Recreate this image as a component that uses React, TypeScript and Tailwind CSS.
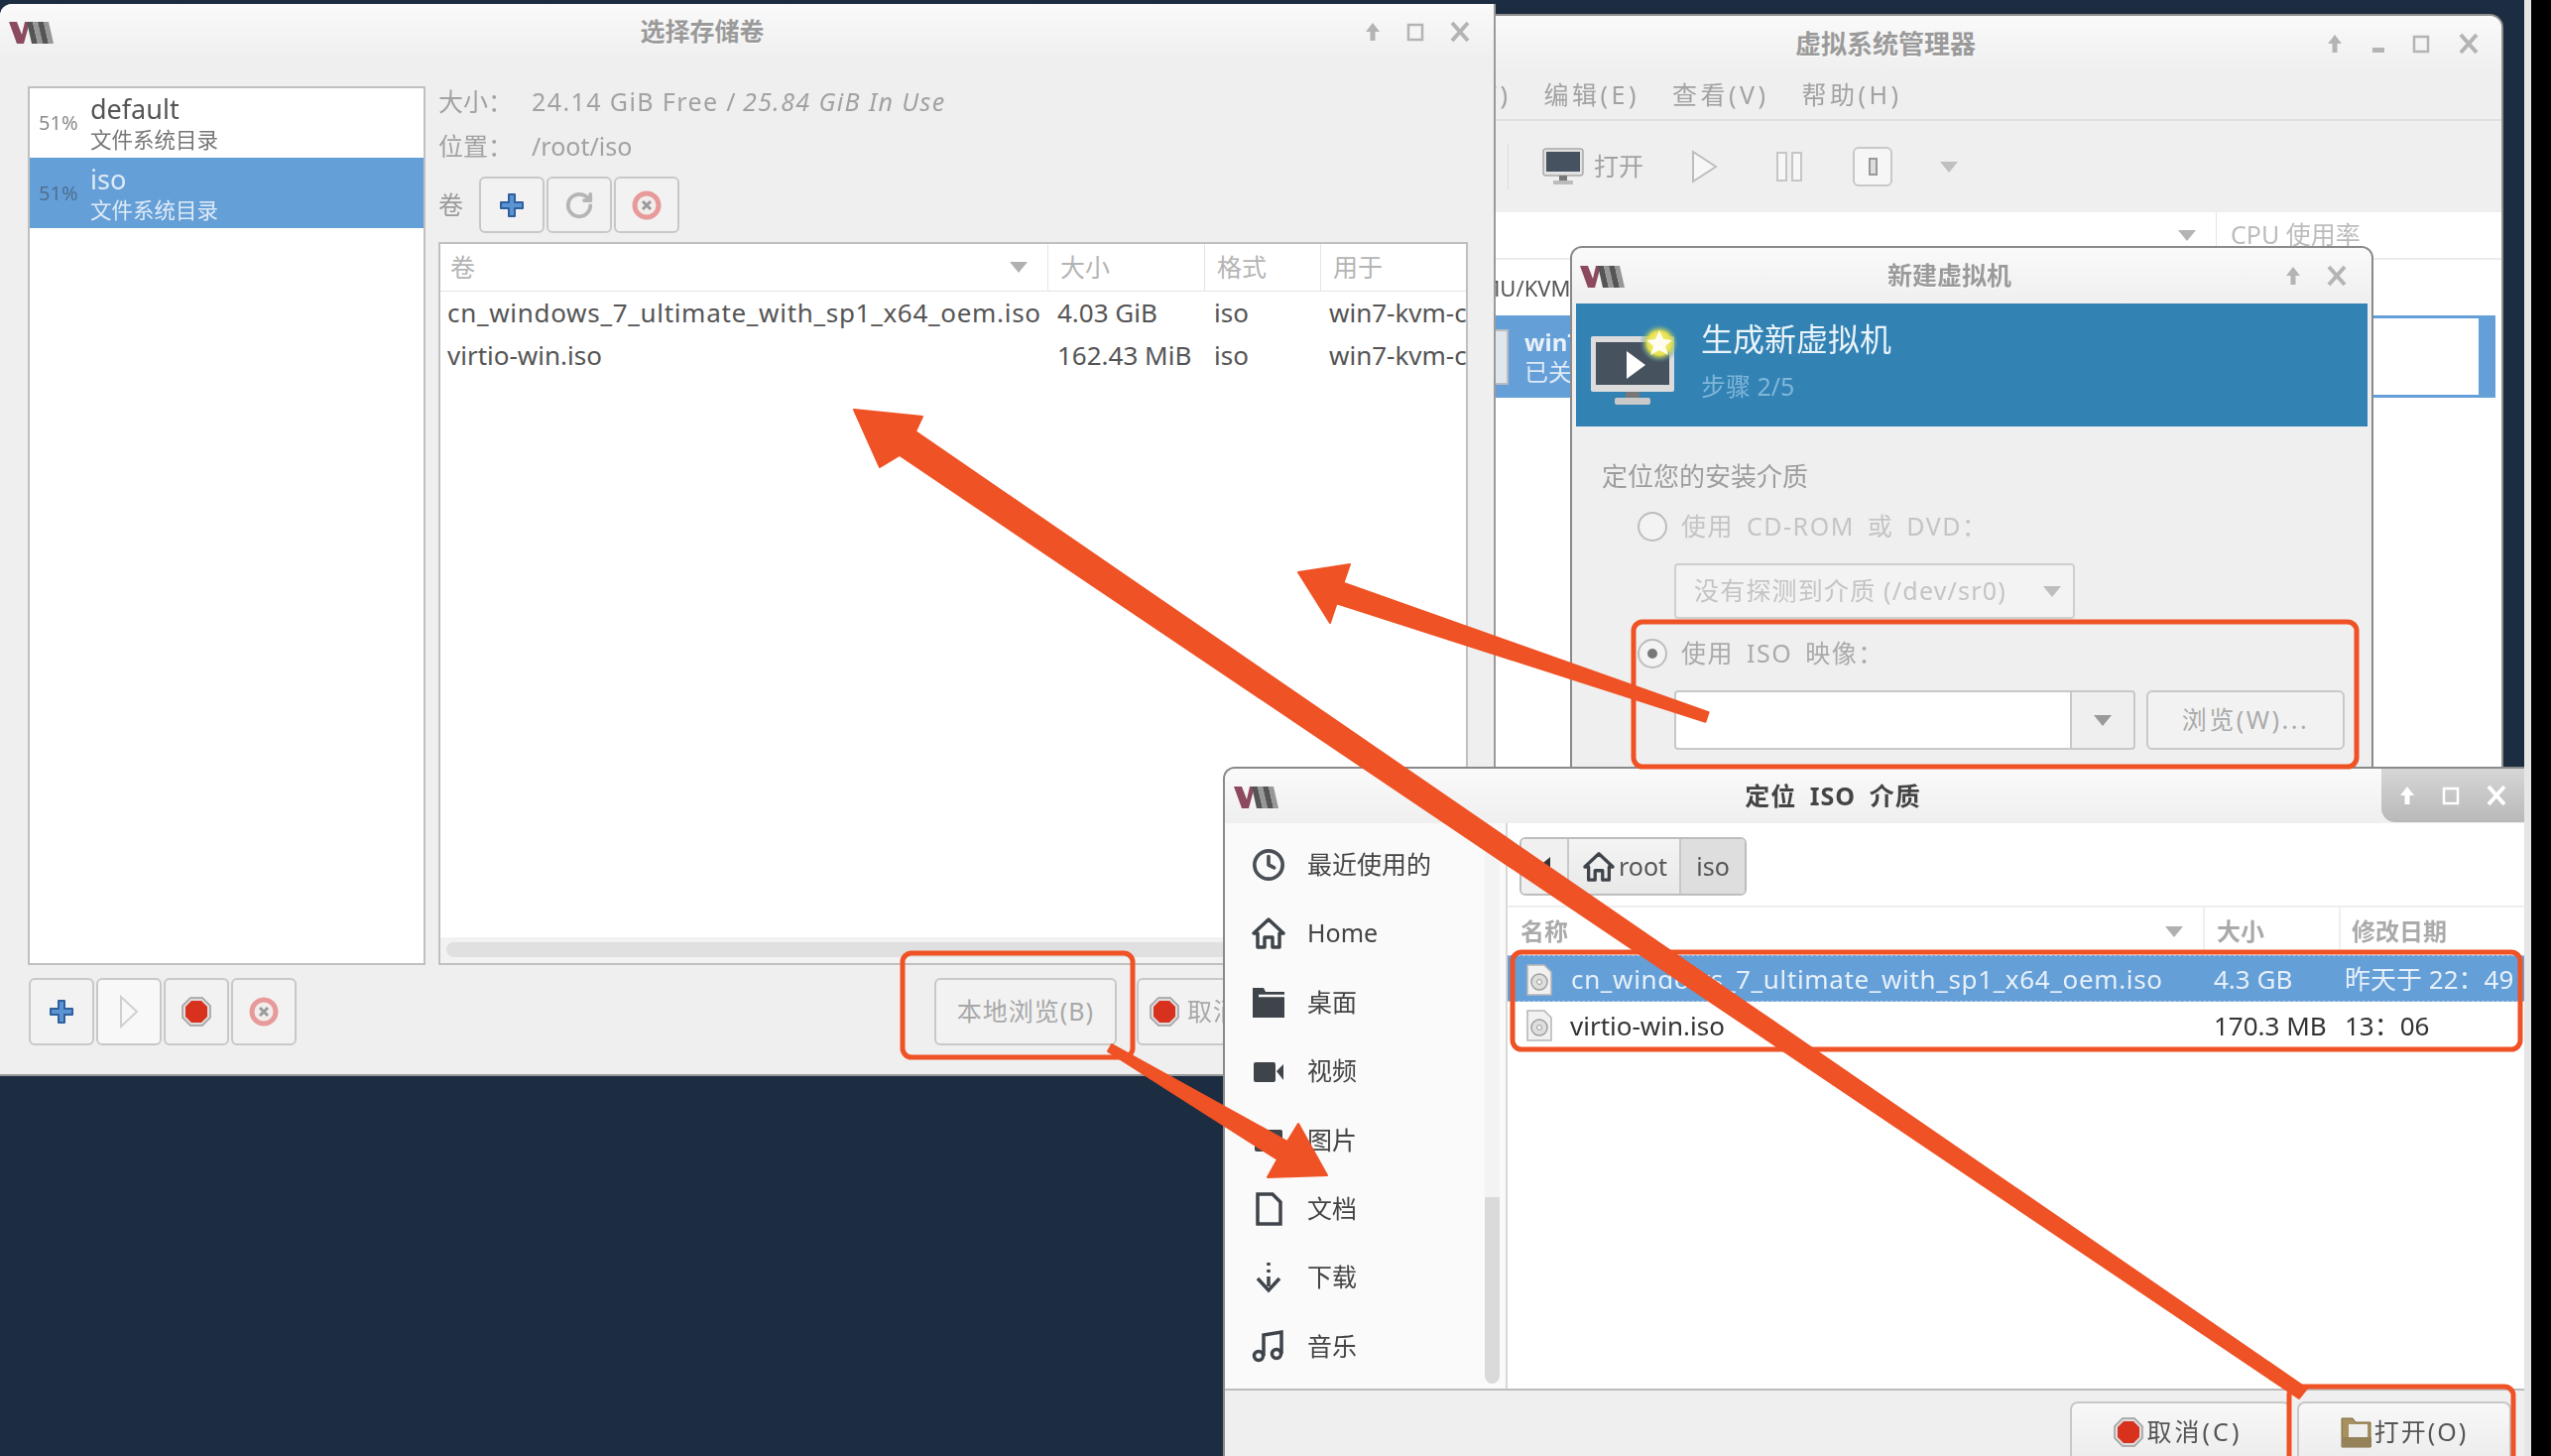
import React from "react";
import { Clock, RotateCw } from "lucide-react";

const Logo = () => (
  <svg width="46" height="26" viewBox="0 0 46 26" className="shrink-0">
    <polygon points="1,3 9,3 14,16 17,3 22,3 16,25 9,25" fill="#8d4a5e" />
    <polygon points="19,3 25,3 30,25 24,25" fill="#555" />
    <polygon points="25,3 30,3 35,25 30,25" fill="#979797" />
    <polygon points="30,3 36,3 41,25 35,25" fill="#555" />
    <polygon points="36,3 41,3 46,25 41,25" fill="#979797" />
  </svg>
);

const Up = ({ c = "#b4b4b4" }: { c?: string }) => (
  <svg width="20" height="24" viewBox="0 0 20 24" className="shrink-0">
    <path d="M10 3 L17 12 H12.5 V21 H7.5 V12 H3 Z" fill={c} />
  </svg>
);
const Max = ({ c = "#b4b4b4" }: { c?: string }) => (
  <svg width="18" height="20" viewBox="0 0 18 20" className="shrink-0">
    <rect x="2" y="3" width="14" height="15" fill="none" stroke={c} strokeWidth="2.5" />
  </svg>
);
const Min = ({ c = "#b4b4b4" }: { c?: string }) => (
  <svg width="14" height="20" viewBox="0 0 14 20" className="shrink-0">
    <rect x="1" y="14" width="12" height="5" fill={c} />
  </svg>
);
const Cross = ({ c = "#b4b4b4" }: { c?: string }) => (
  <svg width="24" height="24" viewBox="0 0 24 24" className="shrink-0">
    <path d="M4 3 L20 21 M20 3 L4 21" stroke={c} strokeWidth="4" fill="none" />
  </svg>
);

const Tri = ({ c = "#b0b0b0", w = 18, h = 11 }: { c?: string; w?: number; h?: number }) => (
  <svg width={w} height={h} viewBox="0 0 18 11" className="shrink-0">
    <path d="M0 0 H18 L9 11 Z" fill={c} />
  </svg>
);

const Plus = () => (
  <svg width="28" height="28" viewBox="0 0 28 28">
    <path d="M11 3 H17 V11 H25 V17 H17 V25 H11 V17 H3 V11 H11 Z" fill="#5a94d2" stroke="#2f5f9c" strokeWidth="2" strokeLinejoin="round" />
  </svg>
);
const Del = () => (
  <svg width="32" height="32" viewBox="0 0 32 32">
    <circle cx="16" cy="16" r="12" fill="#f1eded" stroke="#e89a9a" strokeWidth="5" />
    <path d="M12 12 L20 20 M20 12 L12 20" stroke="#9a9a9a" strokeWidth="3" />
  </svg>
);
const Stop = ({ s = 30 }: { s?: number }) => (
  <svg width={s} height={s} viewBox="0 0 30 30" className="shrink-0">
    <polygon points="9,1 21,1 29,9 29,21 21,29 9,29 1,21 1,9" fill="#ddd" stroke="#9c9c9c" strokeWidth="1.5" />
    <polygon points="10,4 20,4 26,10 26,20 20,26 10,26 4,20 4,10" fill="#d8321f" />
  </svg>
);
const Play = () => (
  <svg width="20" height="34" viewBox="0 0 20 34">
    <path d="M2 2 L18 17 L2 32 Z" fill="#f8f8f8" stroke="#d0d0d0" strokeWidth="2" />
  </svg>
);
const DiscFile = () => (
  <svg width="28" height="32" viewBox="0 0 28 32" className="shrink-0">
    <path d="M2 1 H19 L26 8 V31 H2 Z" fill="#f1f1f1" stroke="#b5b5b5" strokeWidth="1.5" />
    <circle cx="14" cy="18" r="8" fill="#dedede" stroke="#9f9f9f" strokeWidth="1.5" />
    <circle cx="14" cy="18" r="2.5" fill="#f5f5f5" stroke="#9f9f9f" />
  </svg>
);

const Monitor = ({ w = 42, h = 38 }: { w?: number; h?: number }) => (
  <svg width={w} height={h} viewBox="0 0 42 38" className="shrink-0">
    <rect x="1" y="1" width="40" height="27" rx="2" fill="#e2e2e2" stroke="#8a8a8a" />
    <rect x="4" y="4" width="34" height="20" fill="#46525f" />
    <rect x="17" y="28" width="8" height="5" fill="#777" />
    <rect x="11" y="33" width="20" height="4" rx="1" fill="#bbb" />
  </svg>
);

const BannerIcon = () => (
  <svg width="92" height="84" viewBox="0 0 92 84" className="shrink-0">
    <defs>
      <radialGradient id="glow">
        <stop offset="0" stopColor="#fff6a0" />
        <stop offset="0.6" stopColor="#e4e14a" />
        <stop offset="1" stopColor="#3282b4" stopOpacity="0" />
      </radialGradient>
    </defs>
    <rect x="1" y="13" width="84" height="56" rx="2" fill="#dcdcdc" />
    <rect x="6" y="19" width="74" height="43" fill="#47525f" />
    <polygon points="37,28 37,56 56,42" fill="#fff" />
    <rect x="36" y="69" width="14" height="6" fill="#777" />
    <rect x="25" y="75" width="36" height="7" rx="2" fill="#c9c9c9" />
    <circle cx="70" cy="20" r="20" fill="url(#glow)" />
    <polygon points="70,7 74,16 83,17 76,23 79,32 70,27 61,32 64,23 57,17 66,16" fill="#fffdf0" />
  </svg>
);

const OpenFolder = () => (
  <svg width="32" height="36" viewBox="0 0 32 36" className="shrink-0">
    <path d="M1 4 H12 L15 8 H30 V33 H1 Z" fill="#a8915f" stroke="#7d6a42" />
    <rect x="8" y="10" width="19" height="13" fill="#eee" />
    <rect x="1" y="23" width="30" height="10" fill="#968259" />
  </svg>
);

const Win = ({ title, children, controls, titleCls = "" }: any) => (
  <div className="flex h-[56px] shrink-0 items-center bg-gradient-to-b from-[#fafafa] to-[#efefef]">
    {children}
    <div className={`flex-1 text-center text-[25px] font-bold text-[#9a9a9a] [text-shadow:0_1px_0_#fff] ${titleCls}`}>{title}</div>
    {controls}
  </div>
);

const IconBtn = ({ children, cls = "" }: any) => (
  <div className={`flex items-center justify-center rounded-[6px] border-2 border-[#c8c8c8] bg-[#f2f2f2] ${cls}`}>{children}</div>
);

const StorageWindow = () => (
  <div className="absolute left-0 top-[4px] flex h-[1081px] w-[1508px] flex-col overflow-hidden rounded-tl-[12px] border-b-2 border-r-2 border-[#9a9a9a] bg-[#efefef]">
    <Win
      title="选择存储卷"
      controls={
        <div className="flex w-[150px] items-center justify-end gap-[24px] pr-[22px]">
          <Up />
          <Max />
          <Cross />
        </div>
      }
    >
      <div className="w-[60px] pl-[8px]">
        <Logo />
      </div>
    </Win>
    <div className="flex h-[913px] gap-[13px] pl-[28px] pr-[26px] pt-[27px]">
      <div className="w-[401px] shrink-0 border-2 border-[#c0c0c0] bg-white">
        <div className="flex h-[70px] items-center">
          <span className="w-[61px] pl-[9px] text-[20px] text-[#8c8c8c]">51%</span>
          <div className="leading-none">
            <div className="text-[27px] leading-[34px] text-[#555]">default</div>
            <div className="text-[21.5px] leading-[28px] text-[#777]">文件系统目录</div>
          </div>
        </div>
        <div className="flex h-[71px] items-center bg-[#659fd8]">
          <span className="w-[61px] pl-[9px] text-[20px] text-[#4f6f91]">51%</span>
          <div>
            <div className="text-[27px] leading-[34px] text-[#dfeaf6]">iso</div>
            <div className="text-[21.5px] leading-[28px] text-[#dfeaf6]">文件系统目录</div>
          </div>
        </div>
      </div>
      <div className="flex min-w-0 flex-1 flex-col">
        <div className="flex h-[32px] shrink-0 items-center text-[25px] text-[#a2a2a2]">
          <span className="w-[94px]">大小：</span>
          <span className="tracking-[1.4px]">24.14 GiB Free / </span>
          <i className="ml-[6px] tracking-[1.4px]">25.84 GiB In Use</i>
        </div>
        <div className="mt-[9px] flex h-[40px] shrink-0 items-center text-[25px] text-[#a2a2a2]">
          <span className="w-[94px]">位置：</span>
          <span>/root/iso</span>
        </div>
        <div className="mt-[10px] flex h-[57px] shrink-0 items-center text-[25px] text-[#9a9a9a]">
          <span className="w-[41px]">卷</span>
          <div className="flex gap-[2px]">
            <IconBtn cls="h-[57px] w-[66px]"><Plus /></IconBtn>
            <IconBtn cls="h-[57px] w-[66px]"><RotateCw size={30} color="#b5b5b5" strokeWidth={3} /></IconBtn>
            <IconBtn cls="h-[57px] w-[66px]"><Del /></IconBtn>
          </div>
        </div>
        <div className="mt-[9px] flex flex-1 flex-col border-2 border-[#c0c0c0] bg-white">
          <div className="grid h-[48px] shrink-0 grid-cols-[612px_158px_117px_1fr] border-b border-[#e4e4e4] text-[25px] text-[#b4b4b4]">
            <div className="flex items-center justify-between pl-[10px] pr-[20px]"><span>卷</span><Tri /></div>
            <div className="flex items-center border-l border-[#e4e4e4] pl-[12px]">大小</div>
            <div className="flex items-center border-l border-[#e4e4e4] pl-[12px]">格式</div>
            <div className="flex items-center border-l border-[#e4e4e4] pl-[12px]">用于</div>
          </div>
          <div className="grid h-[43px] grid-cols-[612px_158px_117px_1fr] items-center overflow-hidden text-[26px] text-[#555]">
            <span className="whitespace-nowrap pl-[7px] tracking-[0.7px]">cn_windows_7_ultimate_with_sp1_x64_oem.iso</span>
            <span className="whitespace-nowrap pl-[10px]">4.03 GiB</span>
            <span className="pl-[10px]">iso</span>
            <span className="overflow-hidden whitespace-nowrap pl-[9px]">win7-kvm-clone</span>
          </div>
          <div className="grid h-[43px] grid-cols-[612px_158px_117px_1fr] items-center overflow-hidden text-[26px] text-[#555]">
            <span className="whitespace-nowrap pl-[7px]">virtio-win.iso</span>
            <span className="whitespace-nowrap pl-[10px]">162.43 MiB</span>
            <span className="pl-[10px]">iso</span>
            <span className="overflow-hidden whitespace-nowrap pl-[9px]">win7-kvm-clone</span>
          </div>
          <div className="flex-1" />
          <div className="h-[26px] shrink-0 bg-[#f2f2f2] px-[6px] pt-[5px]">
            <div className="h-[15px] rounded-full bg-[#e0e0e0]" />
          </div>
        </div>
      </div>
    </div>
    <div className="mt-[13px] flex items-start gap-[2px] pl-[29px]">
      <IconBtn cls="h-[68px] w-[66px]"><Plus /></IconBtn>
      <IconBtn cls="h-[68px] w-[66px] bg-[#f8f8f8]"><Play /></IconBtn>
      <IconBtn cls="h-[68px] w-[66px]"><Stop /></IconBtn>
      <IconBtn cls="h-[68px] w-[66px]"><Del /></IconBtn>
      <div className="flex-1" />
      <IconBtn cls="mr-[18px] h-[68px] w-[184px] text-[25px] tracking-[1px] text-[#a8a8a8]">本地浏览(B)</IconBtn>
      <IconBtn cls="h-[68px] w-[150px] gap-[8px] text-[25px] tracking-[1px] text-[#a8a8a8]"><Stop />取消(C)</IconBtn>
      <div className="w-[208px]" />
    </div>
  </div>
);

const ManagerWindow = () => (
  <div className="absolute left-[1300px] top-[14px] flex h-[762px] w-[1224px] flex-col overflow-hidden rounded-tr-[14px] border-r-2 border-t-2 border-[#8f8f8f] bg-[#efefef]">
    <Win
      title="虚拟系统管理器"
      titleCls="pl-[168px] text-[26px]"
      controls={
        <div className="flex w-[188px] items-center gap-[27px] pl-[10px]">
          <Up />
          <Min />
          <Max />
          <Cross />
        </div>
      }
    />
    <div className="flex h-[50px] shrink-0 items-center gap-[33px] border-b-2 border-[#e0e0e0] pl-[128px] text-[25px] tracking-[3.5px] text-[#a2a2a2]">
      <span>文件(F)</span>
      <span>编辑(E)</span>
      <span>查看(V)</span>
      <span>帮助(H)</span>
    </div>
    <div className="flex h-[92px] shrink-0 items-center pl-[220px]">
      <div className="h-[46px] w-[1px] bg-[#dcdcdc]" />
      <div className="ml-[34px] flex items-center gap-[10px] text-[25px] text-[#a2a2a2]">
        <Monitor />
        <span>打开</span>
      </div>
      <svg width="30" height="36" viewBox="0 0 30 36" className="ml-[47px]"><path d="M3 3 L26 18 L3 33 Z" fill="#f7f7f7" stroke="#bdbdbd" strokeWidth="2" /></svg>
      <svg width="28" height="36" viewBox="0 0 28 36" className="ml-[56px]"><rect x="2" y="4" width="9" height="28" fill="#f7f7f7" stroke="#c6c6c6" strokeWidth="2" /><rect x="17" y="4" width="9" height="28" fill="#f7f7f7" stroke="#c6c6c6" strokeWidth="2" /></svg>
      <IconBtn cls="ml-[50px] h-[40px] w-[40px] bg-[#f6f6f6]"><div className="h-[18px] w-[9px] border-2 border-[#999] bg-[#ddd]" /></IconBtn>
      <div className="ml-[48px]"><Tri c="#c0c0c0" /></div>
    </div>
    <div className="flex min-h-0 flex-1 flex-col bg-white">
      <div className="flex h-[48px] shrink-0 items-center justify-end border-b-2 border-[#ececec]">
        <Tri c="#b4b4b4" />
        <div className="ml-[20px] flex h-full w-[288px] items-center border-l border-[#e4e4e4] pl-[14px] text-[25px] text-[#bcbcbc]">CPU 使用率</div>
      </div>
      <div className="flex h-[56px] shrink-0 items-center pl-[163px] text-[22px] text-[#555]">QEMU/KVM</div>
      <div className="mr-[6px] flex h-[83px] shrink-0 items-center bg-[#659fd8] pl-[205px] pr-[17px]">
        <div className="h-[56px] w-[16px] border-2 border-[#bbb] bg-[#dfe6ee]" />
        <div className="ml-[16px]">
          <div className="text-[24px] font-bold leading-[30px] text-[#e8f0f8]">win7-kvm</div>
          <div className="text-[24px] leading-[30px] text-[#dfeaf6]">已关闭</div>
        </div>
        <div className="flex-1" />
        <div className="h-[77px] w-[109px] bg-white" />
      </div>
    </div>
  </div>
);

const NewVmWindow = () => (
  <div className="absolute left-[1583px] top-[248px] flex h-[530px] w-[810px] flex-col overflow-hidden rounded-t-[12px] border-2 border-[#8a8a8a] bg-[#efefef]">
    <Win
      title="新建虚拟机"
      controls={
        <div className="flex w-[105px] items-center gap-[22px] pl-[16px]">
          <Up />
          <Cross />
        </div>
      }
    >
      <div className="w-[60px] pl-[7px]">
        <Logo />
      </div>
    </Win>
    <div className="mx-[4px] flex h-[124px] shrink-0 items-center bg-[#3282b4] pl-[14px]">
      <BannerIcon />
      <div className="ml-[20px] mb-[12px]">
        <div className="text-[32px] leading-[46px] text-[#e9f3f9]">生成新虚拟机</div>
        <div className="mt-[8px] text-[25px] leading-[32px] text-[#7fb6da]">步骤 2/5</div>
      </div>
    </div>
    <div className="pl-[30px]">
      <div className="mt-[32px] text-[26px] leading-[36px] text-[#9d9d9d]">定位您的安装介质</div>
      <div className="ml-[36px] mt-[13px] flex h-[40px] items-center gap-[14px] text-[25px] tracking-[1.5px] text-[#c4c4c4] [word-spacing:5px]">
        <div className="h-[30px] w-[30px] shrink-0 rounded-full border-2 border-[#bdbdbd] bg-[#f3f3f3]" />
        使用 CD-ROM 或 DVD：
      </div>
      <div className="ml-[73px] mt-[17px] flex h-[56px] w-[404px] items-center justify-between whitespace-nowrap rounded-[4px] border-2 border-[#cfcfcf] bg-[#f3f3f3] pl-[18px] pr-[12px] text-[25px] tracking-[1.2px] text-[#c4c4c4]">
        没有探测到介质 (/dev/sr0)
        <Tri c="#bdbdbd" />
      </div>
      <div className="ml-[36px] mt-[15px] flex h-[40px] items-center gap-[14px] text-[25px] tracking-[1.5px] text-[#aaa] [word-spacing:5px]">
        <div className="flex h-[30px] w-[30px] shrink-0 items-center justify-center rounded-full border-2 border-[#bdbdbd] bg-[#f3f3f3]">
          <div className="h-[10px] w-[10px] rounded-full bg-[#777]" />
        </div>
        使用 ISO 映像：
      </div>
      <div className="ml-[73px] mt-[17px] flex h-[60px] items-stretch">
        <div className="w-[399px] rounded-l-[4px] border-2 border-r-0 border-[#c8c8c8] bg-white" />
        <div className="flex w-[66px] items-center justify-center rounded-r-[4px] border-2 border-[#c8c8c8] bg-[#efefef]">
          <Tri c="#999" />
        </div>
        <IconBtn cls="ml-[11px] w-[200px] text-[25px] tracking-[2.5px] text-[#aaa]">浏览(W)...</IconBtn>
      </div>
    </div>
  </div>
);

const I = ({ children }: any) => (
  <svg width="34" height="34" viewBox="0 0 34 34" className="shrink-0">
    {children}
  </svg>
);

const places: [string, React.ReactNode][] = [
  ["最近使用的", <Clock key="c" size={34} color="#4a4f55" strokeWidth={2.6} />],
  ["Home", <I key="h"><path d="M17 3 L32 17 L28 17 V31 H21 V21 H13 V31 H6 V17 H2 Z" fill="none" stroke="#3e444a" strokeWidth="3.5" strokeLinejoin="round" /></I>],
  ["桌面", <I key="d"><path d="M1 3 H12 L14 7 H33 V33 H1 Z" fill="#3e444a" /><path d="M7 11 H33" stroke="#fafafa" strokeWidth="2.5" /></I>],
  ["视频", <I key="v"><rect x="2" y="8" width="22" height="20" rx="2" fill="#3e444a" /><path d="M25 17 L32 10 V26 Z" fill="#3e444a" /></I>],
  ["图片", <I key="p"><rect x="3" y="7" width="28" height="22" rx="2" fill="#3e444a" /></I>],
  ["文档", <I key="f"><path d="M6 2 H21 L29 10 V32 H6 Z" fill="none" stroke="#3e444a" strokeWidth="3.5" /></I>],
  ["下载", <I key="l"><path d="M17 2 V5 M17 9 V12 M17 16 V26" stroke="#3e444a" strokeWidth="3.5" /><path d="M6 18 L17 30 L28 18" fill="none" stroke="#3e444a" strokeWidth="3.5" /></I>],
  ["音乐", <I key="m"><path d="M12 27 V6 L30 3 V25" fill="none" stroke="#3e444a" strokeWidth="3.5" /><circle cx="7" cy="27" r="4.5" fill="none" stroke="#3e444a" strokeWidth="3.5" /><circle cx="25" cy="25" r="4.5" fill="none" stroke="#3e444a" strokeWidth="3.5" /></I>],
];

const FileWindow = () => (
  <div className="absolute left-[1233px] top-[773px] flex h-[695px] w-[1312px] flex-col overflow-hidden rounded-tl-[12px] border-l-2 border-t-2 border-[#8a8a8a] bg-[#efefef]">
    <div className="flex h-[55px] shrink-0 items-start bg-gradient-to-b from-[#fafafa] to-[#efefef]">
      <div className="flex h-[55px] w-[60px] items-center pl-[8px]">
        <Logo />
      </div>
      <div className="flex h-[55px] flex-1 items-center justify-center text-[25px] font-bold tracking-[1px] text-[#444] [word-spacing:6px]">定位 ISO 介质</div>
      <div className="flex h-[54px] w-[144px] items-center justify-center gap-[25px] rounded-bl-[14px] bg-gradient-to-b from-[#d6d6d6] to-[#b9b9b9]">
        <Up c="#fff" />
        <Max c="#fff" />
        <Cross c="#fff" />
      </div>
    </div>
    <div className="flex h-[570px] shrink-0 bg-white">
      <div className="flex w-[285px] shrink-0 border-r-2 border-[#d8d8d8] bg-[#fafafa]">
        <div className="w-[262px] pt-[7px]">
          {places.map(([t, ic]) => (
            <div key={t} className="flex h-[69.4px] items-center pl-[27px]">
              <div className="flex w-[34px] justify-center">{ic}</div>
              <span className="ml-[22px] text-[25px] text-[#444]">{t}</span>
            </div>
          ))}
        </div>
        <div className="my-[5px] flex w-[15px] flex-col overflow-hidden rounded-full">
          <div className="h-[372px] bg-[#f3f3f3]" />
          <div className="flex-1 bg-[#dadada]" />
        </div>
      </div>
      <div className="flex min-w-0 flex-1 flex-col">
        <div className="flex h-[85px] shrink-0 items-start border-b-2 border-[#eeeeee] pl-[12px] pt-[14px] text-[25px] text-[#555]">
          <div className="flex h-[59px] overflow-hidden rounded-[6px] border-2 border-[#bdbdbd]">
            <div className="flex w-[48px] items-center justify-center border-r-2 border-[#c8c8c8] bg-[#f0f0f0]">
              <svg width="14" height="20" viewBox="0 0 14 20"><path d="M13 0 V20 L1 10 Z" fill="#333" /></svg>
            </div>
            <div className="flex w-[113px] items-center justify-center gap-[2px] border-r-2 border-[#c8c8c8] bg-gradient-to-b from-[#f4f4f4] to-[#e8e8e8]">
              <svg width="36" height="32" viewBox="0 0 34 34"><path d="M17 3 L32 17 L28 17 V31 H21 V21 H13 V31 H6 V17 H2 Z" fill="none" stroke="#3e444a" strokeWidth="3.5" strokeLinejoin="round" /></svg>
              root
            </div>
            <div className="flex w-[64px] items-center justify-center bg-[#dedede]">iso</div>
          </div>
        </div>
        <div className="grid h-[48px] shrink-0 grid-cols-[701px_137px_1fr] text-[24px] font-bold text-[#aaa]">
          <div className="flex items-center justify-between pl-[13px] pr-[20px]"><span>名称</span><Tri /></div>
          <div className="flex items-center border-l-2 border-[#efefef] pl-[12px]">大小</div>
          <div className="flex items-center border-l-2 border-[#efefef] pl-[11px]">修改日期</div>
        </div>
        <div className="grid h-[47px] shrink-0 grid-cols-[701px_137px_1fr] items-center border-y border-dashed border-[#a8c8ea] bg-[#659fd8] pt-[2px] text-[26px] text-[#e6f0f9]">
          <div className="flex items-center whitespace-nowrap pl-[18px]"><DiscFile /><span className="ml-[18px] tracking-[0.65px]">cn_windows_7_ultimate_with_sp1_x64_oem.iso</span></div>
          <span className="pl-[11px]">4.3 GB</span>
          <span className="whitespace-nowrap pl-[6px]">昨天于 22：49</span>
        </div>
        <div className="grid h-[46px] shrink-0 grid-cols-[701px_137px_1fr] items-center pt-[2px] text-[26px] text-[#333]">
          <div className="flex items-center whitespace-nowrap pl-[18px]"><DiscFile /><span className="ml-[17px]">virtio-win.iso</span></div>
          <span className="whitespace-nowrap pl-[11px]">170.3 MB</span>
          <span className="pl-[6px]">13：06</span>
        </div>
      </div>
    </div>
    <div className="flex flex-1 items-start justify-end gap-[6px] border-t-2 border-[#bcbcbc] pr-[13px] pt-[11px]">
      <div className="flex h-[60px] w-[223px] items-center justify-center gap-[4px] rounded-t-[8px] border-2 border-b-0 border-[#c8c8c8] bg-gradient-to-b from-[#f8f8f8] to-[#ececec] pr-[6px] text-[25px] tracking-[3px] text-[#555]"><Stop />取消(C)</div>
      <div className="flex h-[60px] w-[216px] items-center justify-center gap-[2px] rounded-t-[8px] border-2 border-b-0 border-[#c8c8c8] bg-gradient-to-b from-[#f8f8f8] to-[#ececec] text-[25px] tracking-[2px] text-[#555]"><OpenFolder />打开(O)</div>
    </div>
  </div>
);

const Annotations = () => (
  <svg width="2572" height="1468" viewBox="0 0 2572 1468" className="pointer-events-none absolute left-0 top-0">
    <g fill="none" stroke="#ef5225" strokeWidth="5">
      <rect x="910" y="961" width="232" height="105" rx="9" />
      <rect x="1647" y="627" width="729" height="146" rx="9" />
      <rect x="1525" y="960" width="1016" height="98" rx="9" />
      <rect x="2308" y="1398" width="226" height="100" rx="9" />
    </g>
    <g fill="#ef5225" stroke="#ef5225" strokeWidth="2" strokeLinejoin="round">
      <polygon points="861,413 930,420 923,435 2326,1400 2318,1410 907,459 887,471" />
      <polygon points="1309,577 1361,569 1354.5,587.6 1722.6,718.3 1719.4,727.7 1347.5,608.4 1341,628" />
      <polygon points="1338,1185 1309,1133 1298,1151 1121,1053 1117,1060 1288,1169 1278,1187" />
    </g>
  </svg>
);

export default function App() {
  return (
    <div className="flex h-[1468px] w-[2572px] overflow-hidden bg-black font-['Noto_Sans','Noto_Sans_CJK_SC',sans-serif]">
      <div className="relative h-full w-[2545px] shrink-0 bg-[#1d2d41]">
        <div className="absolute inset-0 blur-[0.6px]">
          <ManagerWindow />
          <NewVmWindow />
          <StorageWindow />
          <FileWindow />
        </div>
        <Annotations />
      </div>
      <div className="h-full w-[7px] shrink-0 bg-[#e6e6e6]" />
    </div>
  );
}
